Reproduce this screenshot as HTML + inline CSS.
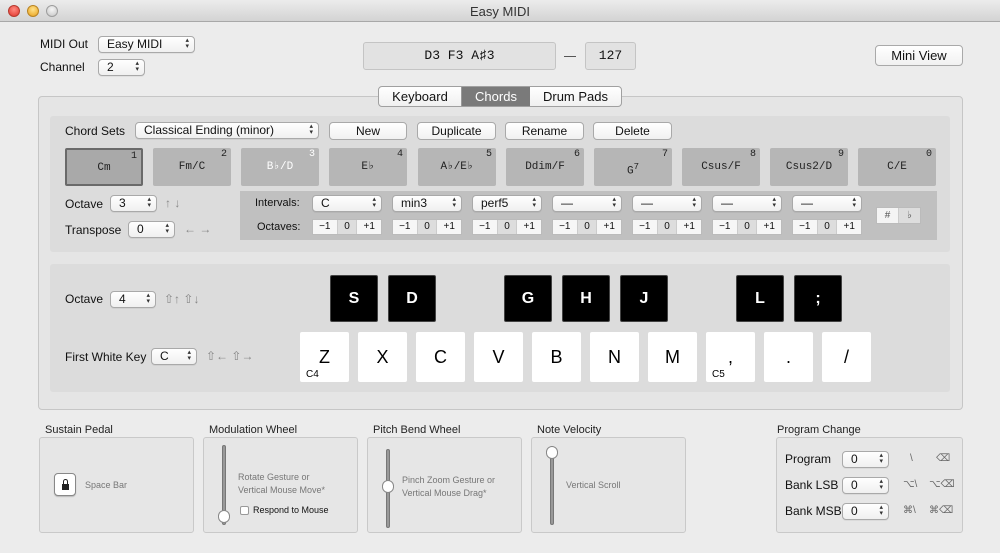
<!DOCTYPE html>
<html><head><meta charset="utf-8"><style>
*{box-sizing:border-box;margin:0;padding:0}
body{width:1000px;height:553px;background:#ececec;font-family:"Liberation Sans","DejaVu Sans",sans-serif;font-size:12px;color:#111;position:relative;overflow:hidden}
.a{position:absolute}
.t{position:absolute;white-space:nowrap}
.pop{position:absolute;height:17px;background:linear-gradient(#fff,#f0f0f0);border:1px solid #a9a9a9;border-radius:4px;font-size:12px;padding-left:8px;line-height:15px;box-shadow:0 1px 0 rgba(0,0,0,.05)}
.ar{position:absolute;right:5px;top:1px;font-size:7px;line-height:6px;color:#333;text-align:center}
.btn{position:absolute;height:18px;background:linear-gradient(#fff,#f1f1f1);border:1px solid #a9a9a9;border-radius:4px;text-align:center;line-height:16px;font-size:12px}
.pad{position:absolute;top:148px;width:78px;height:38px;background:#b6b6b6;border-radius:2px;font-family:"Liberation Mono","DejaVu Sans Mono",monospace;font-size:11px;text-align:center;line-height:38px;color:#222}
.pad i{position:absolute;right:4px;top:2px;font-style:normal;font-size:10px;line-height:10px}
.seg{position:absolute;top:219px;width:70px;height:16px;display:flex;border:1px solid #bbb;background:#f6f6f6;font-size:10px;line-height:14px}
.seg span{flex:1;text-align:center;border-right:1px solid #ccc}
.seg span:nth-child(2){background:#ddd;flex:.8}
.seg span:last-child{border:none}
.bk{position:absolute;top:275px;width:48px;height:47px;background:#000;border:1px solid #444;border-radius:2px;color:#fff;font-weight:bold;font-size:16px;text-align:center;line-height:46px}
.wk{position:absolute;top:332px;width:49px;height:50px;background:#fff;border-radius:2px;text-align:center;font-size:18px;line-height:50px;color:#000}
.wk b{position:absolute;left:6px;bottom:2px;font-size:10px;line-height:10px;font-weight:normal}
.box{position:absolute;top:437px;height:96px;background:#e6e6e6;border:1px solid #c9c9c9;border-radius:3px}
.lbl{position:absolute;top:424px;font-size:11px;color:#222}
.gt{position:absolute;font-size:9px;color:#777;line-height:13px}
.sl{position:absolute;width:4px;background:#999;border-radius:2px;border:1px solid #777}
.kn{position:absolute;width:12px;height:13px;background:#fff;border:1px solid #888;border-radius:6px}
</style></head><body>
<div class="a" style="left:0;top:0;width:1000px;height:22px;background:linear-gradient(#ececec,#d3d3d3);border-bottom:1px solid #a8a8a8"></div>
<div class="a" style="left:8px;top:5px;width:12px;height:12px;border-radius:6px;background:radial-gradient(circle at 50% 35%,#ff8a80,#e0332b);border:1px solid #b53a2f"></div>
<div class="a" style="left:27px;top:5px;width:12px;height:12px;border-radius:6px;background:radial-gradient(circle at 50% 35%,#ffe28a,#e8a01a);border:1px solid #b88425"></div>
<div class="a" style="left:46px;top:5px;width:12px;height:12px;border-radius:6px;background:radial-gradient(circle at 50% 35%,#f6f6f6,#c4c4c4);border:1px solid #9d9d9d"></div>
<div class="t" style="left:0;width:1000px;text-align:center;top:4px;font-size:13px;color:#333">Easy MIDI</div>

<div class="t" style="left:40px;top:37px">MIDI Out</div>
<div class="pop" style="left:98px;top:36px;width:97px">Easy MIDI<span class="ar">▴<br>▾</span></div>
<div class="t" style="left:40px;top:60px">Channel</div>
<div class="pop" style="left:98px;top:59px;width:47px">2<span class="ar">▴<br>▾</span></div>

<div class="a" style="left:363px;top:42px;width:193px;height:28px;background:#e2e2e2;border:1px solid #c4c4c4;border-radius:3px;text-align:center;line-height:26px;font-family:'Liberation Mono',monospace;font-size:13px">D3 F3 A♯3</div>
<div class="a" style="left:564px;top:56px;width:12px;height:1px;background:#555"></div>
<div class="a" style="left:585px;top:42px;width:51px;height:28px;background:#e2e2e2;border:1px solid #c4c4c4;border-radius:3px;text-align:center;line-height:26px;font-family:'Liberation Mono',monospace;font-size:13px">127</div>
<div class="btn" style="left:875px;top:45px;width:88px;height:21px;line-height:19px;font-size:13px">Mini View</div>

<div class="a" style="left:38px;top:96px;width:925px;height:314px;background:#e5e5e5;border:1px solid #c6c6c6;border-radius:4px"></div>
<div class="a" style="left:378px;top:86px;width:244px;height:21px;border:1px solid #a0a0a0;border-radius:4px;background:linear-gradient(#fff,#f0f0f0);display:flex;font-size:13px;line-height:19px;overflow:hidden">
<div style="width:83px;text-align:center;border-right:1px solid #999">Keyboard</div>
<div style="width:68px;text-align:center;background:#7a7a7a;color:#fff">Chords</div>
<div style="flex:1;text-align:center">Drum Pads</div></div>

<div class="a" style="left:50px;top:116px;width:900px;height:136px;background:#dcdcdc;border-radius:3px"></div>
<div class="t" style="left:65px;top:124px">Chord Sets</div>
<div class="pop" style="left:135px;top:122px;width:184px">Classical Ending (minor)<span class="ar">▴<br>▾</span></div>
<div class="btn" style="left:329px;top:122px;width:78px">New</div>
<div class="btn" style="left:417px;top:122px;width:79px">Duplicate</div>
<div class="btn" style="left:505px;top:122px;width:79px">Rename</div>
<div class="btn" style="left:593px;top:122px;width:79px">Delete</div>

<div class="pad" style="left:65px;background:#a9a9a9;border:2px solid #6a6a6a;line-height:36px">Cm<i>1</i></div>
<div class="pad" style="left:153px">Fm/C<i>2</i></div>
<div class="pad" style="left:241px;color:#fff">B♭/D<i>3</i></div>
<div class="pad" style="left:329px">E♭<i>4</i></div>
<div class="pad" style="left:418px">A♭/E♭<i>5</i></div>
<div class="pad" style="left:506px">Ddim/F<i>6</i></div>
<div class="pad" style="left:594px">G<sup style="font-size:9px">7</sup><i>7</i></div>
<div class="pad" style="left:682px">Csus/F<i>8</i></div>
<div class="pad" style="left:770px">Csus2/D<i>9</i></div>
<div class="pad" style="left:858px">C/E<i>0</i></div>

<div class="t" style="left:65px;top:197px">Octave</div>
<div class="pop" style="left:110px;top:195px;width:47px">3<span class="ar">▴<br>▾</span></div>
<div class="t" style="left:165px;top:196px;color:#888">↑ ↓</div>
<div class="t" style="left:65px;top:223px">Transpose</div>
<div class="pop" style="left:128px;top:221px;width:47px">0<span class="ar">▴<br>▾</span></div>
<div class="t" style="left:184px;top:222px;color:#888">← →</div>

<div class="a" style="left:240px;top:191px;width:697px;height:49px;background:#c0c0c0"></div>
<div class="t" style="left:255px;top:197px;font-size:11px">Intervals:</div>
<div class="t" style="left:257px;top:221px;font-size:11px">Octaves:</div>
<div class="pop" style="left:312px;top:195px;width:70px">C<span class="ar">▴<br>▾</span></div>
<div class="pop" style="left:392px;top:195px;width:70px">min3<span class="ar">▴<br>▾</span></div>
<div class="pop" style="left:472px;top:195px;width:70px">perf5<span class="ar">▴<br>▾</span></div>
<div class="pop" style="left:552px;top:195px;width:70px">—<span class="ar">▴<br>▾</span></div>
<div class="pop" style="left:632px;top:195px;width:70px">—<span class="ar">▴<br>▾</span></div>
<div class="pop" style="left:712px;top:195px;width:70px">—<span class="ar">▴<br>▾</span></div>
<div class="pop" style="left:792px;top:195px;width:70px">—<span class="ar">▴<br>▾</span></div>
<div class="seg" style="left:312px"><span>−1</span><span>0</span><span>+1</span></div>
<div class="seg" style="left:392px"><span>−1</span><span>0</span><span>+1</span></div>
<div class="seg" style="left:472px"><span>−1</span><span>0</span><span>+1</span></div>
<div class="seg" style="left:552px"><span>−1</span><span>0</span><span>+1</span></div>
<div class="seg" style="left:632px"><span>−1</span><span>0</span><span>+1</span></div>
<div class="seg" style="left:712px"><span>−1</span><span>0</span><span>+1</span></div>
<div class="seg" style="left:792px"><span>−1</span><span>0</span><span>+1</span></div>
<div class="a" style="left:876px;top:207px;width:45px;height:17px;border:1px solid #bbb;background:#f4f4f4;display:flex;font-size:10px;line-height:15px;color:#555"><span style="flex:1;text-align:center;border-right:1px solid #ccc">#</span><span style="flex:1;text-align:center;background:#ddd">♭</span></div>

<div class="a" style="left:50px;top:264px;width:900px;height:128px;background:#dcdcdc;border-radius:3px"></div>
<div class="t" style="left:65px;top:292px">Octave</div>
<div class="pop" style="left:110px;top:291px;width:46px">4<span class="ar">▴<br>▾</span></div>
<div class="t" style="left:164px;top:292px;color:#888">⇧↑ ⇧↓</div>
<div class="t" style="left:65px;top:350px">First White Key</div>
<div class="pop" style="left:151px;top:348px;width:46px">C<span class="ar">▴<br>▾</span></div>
<div class="t" style="left:206px;top:349px;color:#888">⇧← ⇧→</div>

<div class="bk" style="left:330px">S</div>
<div class="bk" style="left:388px">D</div>
<div class="bk" style="left:504px">G</div>
<div class="bk" style="left:562px">H</div>
<div class="bk" style="left:620px">J</div>
<div class="bk" style="left:736px">L</div>
<div class="bk" style="left:794px">;</div>
<div class="wk" style="left:300px">Z<b>C4</b></div>
<div class="wk" style="left:358px">X</div>
<div class="wk" style="left:416px">C</div>
<div class="wk" style="left:474px">V</div>
<div class="wk" style="left:532px">B</div>
<div class="wk" style="left:590px">N</div>
<div class="wk" style="left:648px">M</div>
<div class="wk" style="left:706px">,<b>C5</b></div>
<div class="wk" style="left:764px">.</div>
<div class="wk" style="left:822px">/</div>

<div class="lbl" style="left:45px">Sustain Pedal</div>
<div class="lbl" style="left:209px">Modulation Wheel</div>
<div class="lbl" style="left:373px">Pitch Bend Wheel</div>
<div class="lbl" style="left:537px">Note Velocity</div>
<div class="lbl" style="left:777px">Program Change</div>
<div class="box" style="left:39px;width:155px"></div>
<div class="box" style="left:203px;width:155px"></div>
<div class="box" style="left:367px;width:155px"></div>
<div class="box" style="left:531px;width:155px"></div>
<div class="box" style="left:776px;width:187px"></div>

<div class="a" style="left:54px;top:473px;width:22px;height:23px;background:#fff;border:1px solid #888;border-radius:4px;box-shadow:0 1px 1px rgba(0,0,0,.2)"><div style="position:absolute;left:7px;top:10px;width:7px;height:6px;background:#222"></div><div style="position:absolute;left:8px;top:5px;width:5px;height:6px;border:1.5px solid #222;border-bottom:none;border-radius:3px 3px 0 0"></div></div>
<div class="gt" style="left:85px;top:479px">Space Bar</div>

<div class="sl" style="left:222px;top:445px;height:80px"></div>
<div class="kn" style="left:218px;top:510px"></div>
<div class="gt" style="left:238px;top:471px">Rotate Gesture or<br>Vertical Mouse Move*</div>
<div class="a" style="left:240px;top:506px;width:9px;height:9px;border:1px solid #999;background:#fff;border-radius:2px"></div>
<div class="t" style="left:253px;top:505px;font-size:9px">Respond to Mouse</div>

<div class="sl" style="left:386px;top:449px;height:79px"></div>
<div class="kn" style="left:382px;top:480px"></div>
<div class="gt" style="left:402px;top:474px">Pinch Zoom Gesture or<br>Vertical Mouse Drag*</div>

<div class="sl" style="left:550px;top:446px;height:79px"></div>
<div class="kn" style="left:546px;top:446px"></div>
<div class="gt" style="left:566px;top:479px">Vertical Scroll</div>

<div class="t" style="left:785px;top:452px">Program</div>
<div class="t" style="left:785px;top:478px">Bank LSB</div>
<div class="t" style="left:785px;top:504px">Bank MSB</div>
<div class="pop" style="left:842px;top:451px;width:47px">0<span class="ar">▴<br>▾</span></div>
<div class="pop" style="left:842px;top:477px;width:47px">0<span class="ar">▴<br>▾</span></div>
<div class="pop" style="left:842px;top:503px;width:47px">0<span class="ar">▴<br>▾</span></div>
<div class="t" style="left:910px;top:453px;font-size:10px;color:#666">\</div>
<div class="t" style="left:936px;top:453px;font-size:10px;color:#666">⌫</div>
<div class="t" style="left:903px;top:479px;font-size:10px;color:#666">⌥\</div>
<div class="t" style="left:929px;top:479px;font-size:10px;color:#666">⌥⌫</div>
<div class="t" style="left:903px;top:505px;font-size:10px;color:#666">⌘\</div>
<div class="t" style="left:929px;top:505px;font-size:10px;color:#666">⌘⌫</div>
</body></html>
